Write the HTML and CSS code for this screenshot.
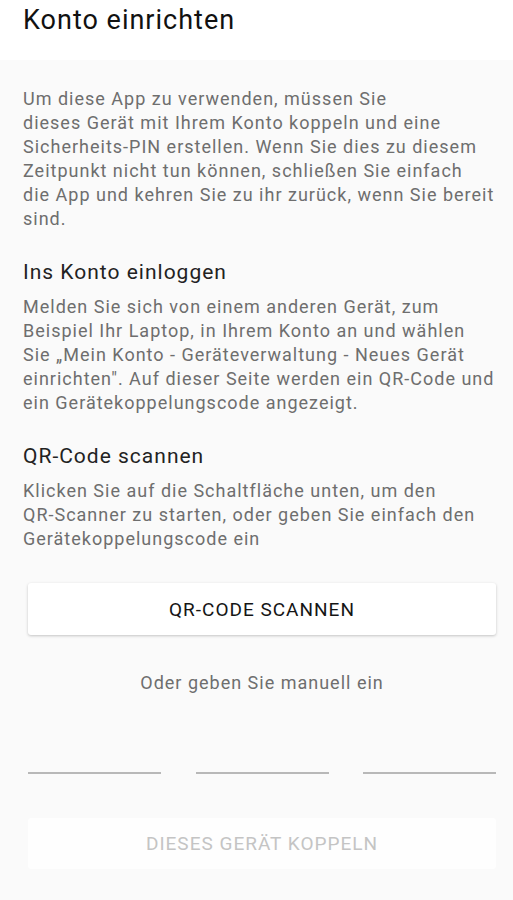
FILE: index.html
```html
<!DOCTYPE html>
<html lang="de">
<head>
<meta charset="utf-8">
<link rel="stylesheet" href="styles.css">
</head>
<body>
<header class="appbar"><h1 class="title">Konto einrichten</h1></header>
<main class="content">
  <p class="text">Um diese App zu verwenden, müssen Sie<br>dieses Gerät mit Ihrem Konto koppeln und eine<br>Sicherheits-PIN erstellen. Wenn Sie dies zu diesem<br>Zeitpunkt nicht tun können, schließen Sie einfach<br>die App und kehren Sie zu ihr zurück, wenn Sie bereit<br>sind.</p>
  <h2 class="heading">Ins Konto einloggen</h2>
  <p class="text">Melden Sie sich von einem anderen Gerät, zum<br>Beispiel Ihr Laptop, in Ihrem Konto an und wählen<br>Sie „Mein Konto - Geräteverwaltung - Neues Gerät<br>einrichten". Auf dieser Seite werden ein QR-Code und<br>ein Gerätekoppelungscode angezeigt.</p>
  <h2 class="heading">QR-Code scannen</h2>
  <p class="text">Klicken Sie auf die Schaltfläche unten, um den<br>QR-Scanner zu starten, oder geben Sie einfach den<br>Gerätekoppelungscode ein</p>
  <button class="btn primary">QR-CODE SCANNEN</button>
  <p class="manual">Oder geben Sie manuell ein</p>
  <div class="inputs">
    <span class="field"></span>
    <span class="field"></span>
    <span class="field"></span>
  </div>
  <button class="btn disabled">DIESES GERÄT KOPPELN</button>
</main>
</body>
</html>
```
FILE: styles.css
```css
html, body {
  margin: 0;
  padding: 0;
  background: #fafafa;
  font-family: Roboto, "Noto Sans", sans-serif;
}
.appbar {
  background: #ffffff;
  height: 60px;
  padding: 0 23px;
  display: flex;
  align-items: flex-start;
}
.title {
  margin: 3px 0 0;
  font-size: 27px;
  font-weight: 400;
  letter-spacing: 1px;
  color: #111;
  line-height: 34px;
}
.content {
  padding: 27px 17px 0 28px;
  display: flex;
  flex-direction: column;
}
.text {
  margin: 0 0 0 -5px;
  font-size: 18px;
  line-height: 24px;
  letter-spacing: 1px;
  color: #6e6e6e;
  white-space: nowrap;
}
.heading {
  margin: 27px 0 9px -5px;
  font-size: 21px;
  font-weight: 400;
  letter-spacing: 1px;
  color: #222;
  line-height: 28px;
}
.btn {
  font-family: Roboto, "Noto Sans", sans-serif;
  border: none;
  border-radius: 3px;
  height: 52px;
  width: 468px;
  font-size: 19px;
  font-weight: 400;
  letter-spacing: 1px;
  background: #fff;
  padding: 0;
}
.primary {
  margin-top: 32px;
  color: #151515;
  box-shadow: 0 1px 3px rgba(0,0,0,0.22);
}
.manual {
  margin: 36px 0 0;
  text-align: center;
  width: 468px;
  font-size: 18px;
  letter-spacing: 1px;
  line-height: 24px;
  color: #6e6e6e;
}
.inputs {
  margin-top: 77px;
  width: 468px;
  display: flex;
  justify-content: space-between;
}
.field {
  width: 133px;
  height: 2px;
  background: #b8b8b8;
}
.disabled {
  margin-top: 44px;
  height: 51px;
  color: #c4c4c4;
  background: #fefefe;
}
```
